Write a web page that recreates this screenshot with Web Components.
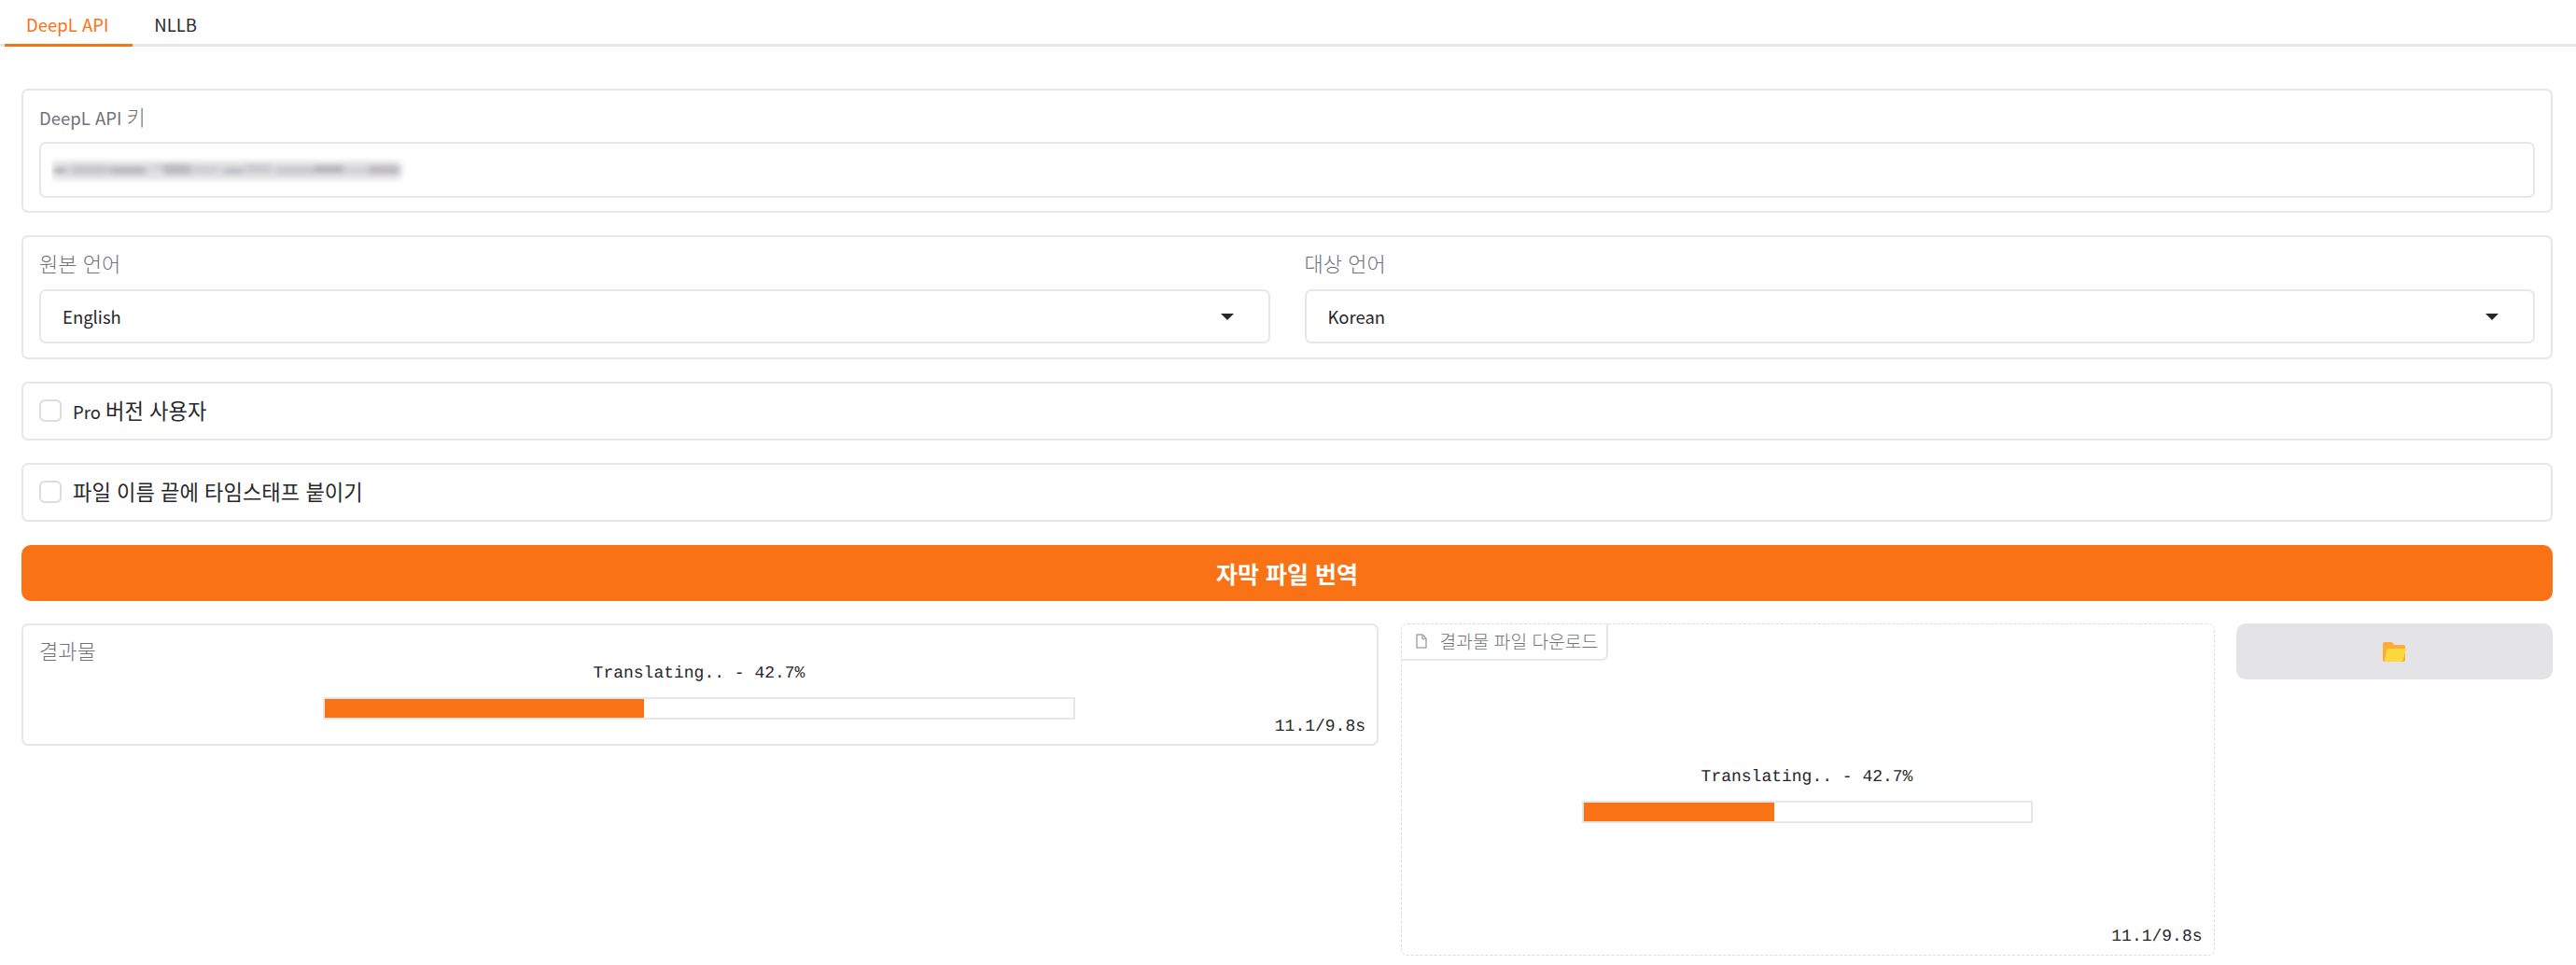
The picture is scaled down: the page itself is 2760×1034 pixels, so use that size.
<!DOCTYPE html>
<html lang="ko">
<head>
<meta charset="utf-8">
<title>DeepL API</title>
<style>
  html, body { margin: 0; background: #fff; }
  body {
    font-family: "Noto Sans CJK KR", "Noto Sans", sans-serif;
    color: #27272a;
    --orange: #f97316;
    --line: #e7e7e9;
    --muted: #71717a;
  }
  .page { display: flex; flex-direction: column; padding: 0 25px 0 23px; }
  .stack { display: flex; flex-direction: column; gap: 24px; padding-top: 45px; }
  .results { display: grid; grid-template-columns: 1454px 872px 1fr; gap: 23.5px; align-items: start; }
  ko-text { font-size: 22.2px; font-weight: 400; }
</style>
</head>
<body>
<div class="page">
  <tab-bar>
    <tab-item active>DeepL API</tab-item>
    <tab-item>NLLB</tab-item>
  </tab-bar>
  <div class="stack">
    <form-block>
      <field-box label="DeepL API &lt;b&gt;키&lt;/b&gt;"><blurred-key></blurred-key></field-box>
    </form-block>
    <form-block columns>
      <field-box label="&lt;b&gt;원본 언어&lt;/b&gt;" tall><select-box>English</select-box></field-box>
      <field-box label="&lt;b&gt;대상 언어&lt;/b&gt;" tall><select-box>Korean</select-box></field-box>
    </form-block>
    <form-block check><check-row>Pro <ko-text>버전 사용자</ko-text></check-row></form-block>
    <form-block check><check-row><ko-text>파일 이름 끝에 타임스태프 붙이기</ko-text></check-row></form-block>
    <main-button>자막 파일 번역</main-button>
    <div class="results">
      <output-box></output-box>
      <file-box></file-box>
      <folder-button></folder-button>
    </div>
  </div>
</div>

<script>
const mono = `"Liberation Mono", "DejaVu Sans Mono", monospace`;

class TabBar extends HTMLElement {
  constructor() {
    super();
    this.attachShadow({ mode: "open" });
    this.shadowRoot.innerHTML = `
      <style>
        :host { display: flex; height: 47px; margin: 0 -25px 0 -23px; padding-left: 5px; border-bottom: 3px solid var(--line); }
      </style>
      <slot></slot>`;
  }
}
customElements.define("tab-bar", TabBar);

class TabItem extends HTMLElement {
  constructor() {
    super();
    this.attachShadow({ mode: "open" });
    this.shadowRoot.innerHTML = `
      <style>
        :host { display: block; box-sizing: border-box; height: 50px; padding: 12px 26px 0 23px; font-size: 18.5px; line-height: 29px; color: #27272a; }
        :host([active]) { color: var(--orange); border-bottom: 3px solid var(--orange); }
      </style>
      <slot></slot>`;
  }
}
customElements.define("tab-item", TabItem);

class FormBlock extends HTMLElement {
  constructor() {
    super();
    this.attachShadow({ mode: "open" });
    this.shadowRoot.innerHTML = `
      <style>
        :host { display: block; box-sizing: border-box; border: 2px solid var(--line); border-radius: 7px; padding: 19px 17px 14px; background: #fff; }
        :host([columns]) { display: grid; grid-template-columns: 1fr 1fr; gap: 37px; padding-bottom: 15px; }
        :host([check]) { padding: 17px 17px 18px; }
      </style>
      <slot></slot>`;
  }
}
customElements.define("form-block", FormBlock);

class FieldBox extends HTMLElement {
  constructor() {
    super();
    this.attachShadow({ mode: "open" });
    this.shadowRoot.innerHTML = `
      <style>
        :host { display: block; }
        .label { display: block; height: 36px; font-size: 18.5px; line-height: 16px; color: var(--muted); }
        :host([tall]) .label { height: 37px; }
        b { font-size: 22px; font-weight: 300; }
      </style>
      <span class="label">${this.getAttribute("label") || ""}</span>
      <slot></slot>`;
  }
}
customElements.define("field-box", FieldBox);

class KoText extends HTMLElement {
  constructor() {
    super();
    this.attachShadow({ mode: "open" });
    this.shadowRoot.innerHTML = `<style>:host { display: inline; }</style><slot></slot>`;
  }
}
customElements.define("ko-text", KoText);

class BlurredKey extends HTMLElement {
  constructor() {
    super();
    this.attachShadow({ mode: "open" });
    // the key is blurred out in the reference, so just smudges here
    const bits = [[0,14,"#b4b4b7",12,7],[18,40,"#c8c8cc",10,10],[60,40,"#bcbbbe",11,9],[104,14,"#d6d6d9",9,8],[118,30,"#bcbcbe",9,11],[150,28,"#cecdd1",11,8],[182,22,"#c0c1c7",12,8],[206,28,"#cbcbd0",9,10],[238,42,"#cacace",11,9],[280,32,"#b8b6b9",10,9],[314,24,"#d0d0d3",12,7],[338,34,"#bebcbf",10,10]];
    this.shadowRoot.innerHTML = `
      <style>
        :host { display: block; box-sizing: border-box; height: 60px; border: 2px solid var(--line); border-radius: 7px; padding: 13px 11px; }
        svg { display: block; }
      </style>
      <svg width="390" height="32" viewBox="0 0 390 32">
        <defs><filter id="b" x="-5%" y="-60%" width="110%" height="220%"><feGaussianBlur stdDeviation="3.5 2.6"></feGaussianBlur></filter></defs>
        <g filter="url(#b)">
          <rect x="2" y="5" width="372" height="21" fill="#e4e4e6"></rect>
          ${bits.map(([x, w, c, y, h]) => `<rect x="${x + 2}" y="${y}" width="${w}" height="${h}" fill="${c}"></rect>`).join("")}
        </g>
      </svg>`;
  }
}
customElements.define("blurred-key", BlurredKey);

class SelectBox extends HTMLElement {
  constructor() {
    super();
    this.attachShadow({ mode: "open" });
    this.shadowRoot.innerHTML = `
      <style>
        :host { display: flex; align-items: center; justify-content: space-between; box-sizing: border-box; height: 58px; border: 2px solid var(--line); border-radius: 7px; padding: 0 37px 0 23px; font-size: 18.5px; color: #27272a; }
        .arrow { width: 0; height: 0; border-left: 7px solid transparent; border-right: 7px solid transparent; border-top: 7px solid #27272a; }
      </style>
      <span><slot></slot></span>
      <span class="arrow"></span>`;
  }
}
customElements.define("select-box", SelectBox);

class CheckRow extends HTMLElement {
  constructor() {
    super();
    this.attachShadow({ mode: "open" });
    this.shadowRoot.innerHTML = `
      <style>
        :host { display: flex; align-items: center; gap: 12px; height: 24px; font-size: 18.5px; color: #27272a; }
        .box { box-sizing: border-box; width: 24px; height: 24px; border: 2px solid #dcdcdf; border-radius: 6px; background: #fff; }
        .text { padding-bottom: 2px; }
      </style>
      <span class="box"></span>
      <span class="text"><slot></slot></span>`;
  }
}
customElements.define("check-row", CheckRow);

class MainButton extends HTMLElement {
  constructor() {
    super();
    this.attachShadow({ mode: "open" });
    this.shadowRoot.innerHTML = `
      <style>
        :host { display: flex; align-items: center; justify-content: center; height: 60px; margin-top: 1px; border-radius: 10px; background: var(--orange); color: #fff; font-size: 25px; font-weight: 700; }
      </style>
      <slot></slot>`;
  }
}
customElements.define("main-button", MainButton);

class ProgressBar extends HTMLElement {
  constructor() {
    super();
    this.attachShadow({ mode: "open" });
    this.shadowRoot.innerHTML = `
      <style>
        :host { display: flex; flex-direction: column; align-items: center; gap: 13px; width: var(--bar-width); font-family: ${mono}; font-size: 18px; line-height: 24px; color: #27272a; text-rendering: geometricPrecision; }
        .track { box-sizing: border-box; width: 100%; height: 24px; border: 2px solid var(--line); background: #fff; }
        .fill { width: 42.7%; height: 100%; background: var(--orange); }
      </style>
      <span>Translating.. - 42.7%</span>
      <div class="track"><div class="fill"></div></div>`;
  }
}
customElements.define("progress-bar", ProgressBar);

class OutputBox extends HTMLElement {
  constructor() {
    super();
    this.attachShadow({ mode: "open" });
    this.shadowRoot.innerHTML = `
      <style>
        :host { display: block; position: relative; box-sizing: border-box; height: 131px; border: 2px solid var(--line); border-radius: 7px; }
        .label { position: absolute; left: 17px; top: 11px; font-size: 22px; font-weight: 300; line-height: 30px; color: var(--muted); }
        progress-bar { --bar-width: 806px; position: absolute; left: 321px; top: 40px; }
        .time { position: absolute; right: 12px; bottom: 6px; font-family: ${mono}; font-size: 18px; line-height: 24px; color: #27272a; text-rendering: geometricPrecision; }
      </style>
      <span class="label">결과물</span>
      <progress-bar></progress-bar>
      <span class="time">11.1/9.8s</span>`;
  }
}
customElements.define("output-box", OutputBox);

class FileBox extends HTMLElement {
  constructor() {
    super();
    this.attachShadow({ mode: "open" });
    this.shadowRoot.innerHTML = `
      <style>
        :host { display: block; position: relative; box-sizing: border-box; height: 356px; border: 1px dashed #dcdcdf; border-radius: 7px; }
        .tag { position: absolute; left: -1px; top: -1px; display: flex; align-items: center; gap: 14px; box-sizing: border-box; height: 40px; padding: 0 9px 0 16px; border: 2px solid var(--line); border-width: 0 2px 2px 0; border-radius: 0 0 7px 0; font-size: 19.2px; font-weight: 300; color: var(--muted); }
        .tag svg { display: block; }
        progress-bar { --bar-width: 483px; position: absolute; left: 193px; top: 152px; }
        .time { position: absolute; right: 12px; bottom: 7px; font-family: ${mono}; font-size: 18px; line-height: 24px; color: #27272a; text-rendering: geometricPrecision; }
      </style>
      <span class="tag">
        <svg width="12" height="16" viewBox="0 0 12 16" fill="none" stroke="#a8a8ae" stroke-width="1.5" stroke-linejoin="round">
          <path d="M1 1h6.2L11 5.2V15H1z"></path>
          <path d="M7 1v4.4h4"></path>
        </svg>
        결과물 파일 다운로드
      </span>
      <progress-bar></progress-bar>
      <span class="time">11.1/9.8s</span>`;
  }
}
customElements.define("file-box", FileBox);

class FolderButton extends HTMLElement {
  constructor() {
    super();
    this.attachShadow({ mode: "open" });
    this.shadowRoot.innerHTML = `
      <style>
        :host { display: flex; align-items: center; justify-content: center; height: 60px; border-radius: 10px; background: #e4e4e7; }
        svg { display: block; }
      </style>
      <svg width="25" height="21" viewBox="0 0 25 21">
        <path d="M0 2a2 2 0 0 1 2-2h7a2 2 0 0 1 1.6.8L12 3h10a2 2 0 0 1 2 2v14a2 2 0 0 1-2 2H2a2 2 0 0 1-2-2z" fill="#ffac33"></path>
        <path d="M5.6 7h17.8a1.3 1.3 0 0 1 1.3 1.6L21.6 19.5a2 2 0 0 1-1.9 1.5H3a1.3 1.3 0 0 1-1.2-1.6L4.2 8.1A1.6 1.6 0 0 1 5.6 7z" fill="#ffd83d"></path>
      </svg>`;
  }
}
customElements.define("folder-button", FolderButton);
</script>
</body>
</html>
